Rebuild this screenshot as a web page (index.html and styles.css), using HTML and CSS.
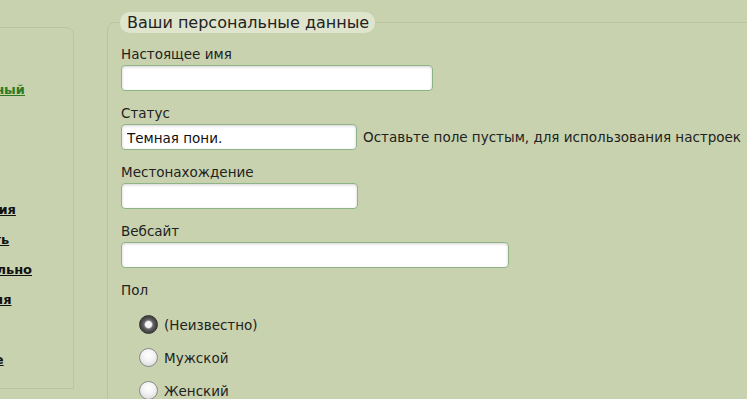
FILE: index.html
```html
<!DOCTYPE html>
<html lang="ru">
<head>
<meta charset="utf-8">
<title>Профиль</title>
<link rel="stylesheet" href="styles.css">
</head>
<body>
<div class="page">
  <nav class="sidebar">
    <ul class="menu">
      <li><a href="#">Основное</a></li>
      <li><a href="#" class="active">Персональный</a></li>
      <li><a href="#">Связь</a></li>
      <li><a href="#">Подпись</a></li>
      <li><a href="#">Вид</a></li>
      <li><a href="#">Уведомления</a></li>
      <li><a href="#">Приватность</a></li>
      <li><a href="#">Дополнительно</a></li>
      <li><a href="#">Информация</a></li>
      <li><a href="#">Друзья</a></li>
      <li><a href="#">Сохранение</a></li>
    </ul>
  </nav>
  <main class="main">
    <fieldset class="box">
      <legend class="legend">Ваши персональные данные</legend>
      <div class="field">
        <label class="label">Настоящее имя</label>
        <input class="input w-name" type="text" value="">
      </div>
      <div class="field">
        <label class="label">Статус</label>
        <div class="inline">
          <input class="input w-status" type="text" value="Темная пони.">
          <span class="help">Оставьте поле пустым, для использования настроек</span>
        </div>
      </div>
      <div class="field">
        <label class="label">Местонахождение</label>
        <input class="input w-loc" type="text" value="">
      </div>
      <div class="field">
        <label class="label">Вебсайт</label>
        <input class="input w-web" type="text" value="">
      </div>
      <div class="gender">
        <div class="label">Пол</div>
        <div class="radios">
          <label class="radio"><span class="dot checked"></span>(Неизвестно)</label>
          <label class="radio"><span class="dot"></span>Мужской</label>
          <label class="radio"><span class="dot"></span>Женский</label>
        </div>
      </div>
    </fieldset>
  </main>
</div>
</body>
</html>
```

FILE: styles.css
```css
html, body {
  margin: 0;
  padding: 0;
  background: #c8d2ae;
  overflow: hidden;
}
body {
  font-family: "DejaVu Sans", Verdana, sans-serif;
  color: #222;
  font-size: 13.5px;
}
.page {
  display: flex;
  align-items: flex-start;
  width: 900px;
}
.sidebar {
  margin-left: -96px;
  margin-top: 27px;
  width: 168px;
  height: 360px;
  border: 1px solid #bac4a0;
  border-radius: 0 8px 0 0;
  flex: none;
}
.menu {
  list-style: none;
  margin: 0;
  padding: 23px 0 0 9px;
}
.menu li {
  height: 30px;
  line-height: 16px;
  white-space: nowrap;
}
.menu a {
  font-weight: bold;
  font-size: 13px;
  color: #111;
  text-decoration: underline;
}
.menu a.active {
  color: #2f7a1e;
}
.main {
  margin-left: 33px;
  margin-top: 12px;
  flex: 1;
}
.box {
  margin: 0;
  border: 1px solid #bac4a0;
  border-radius: 8px 0 0 0;
  padding: 14px 0 20px 13px;
  min-height: 400px;
}
.legend {
  font-size: 16px;
  line-height: 21px;
  background: #dfe5cd;
  border-radius: 10px;
  padding: 0 6px 0 7px;
  margin-left: -1px;
  color: #222;
}
.field {
  display: flex;
  flex-direction: column;
  align-items: flex-start;
  margin-bottom: 15px;
}
.label {
  display: block;
  line-height: 15px;
  margin-bottom: 3px;
}
.inline {
  display: flex;
  align-items: center;
  gap: 6px;
  white-space: nowrap;
}
.input {
  box-sizing: border-box;
  height: 26px;
  border: 1px solid #8db386;
  border-radius: 4px;
  background: #fff;
  box-shadow: inset 0 1px 3px rgba(0, 0, 0, 0.18);
  font-family: "DejaVu Sans", Verdana, sans-serif;
  font-size: 13.5px;
  color: #111;
  padding: 2px 5px 0;
  margin: 0;
}
.w-name { width: 312px; }
.w-status { width: 236px; }
.w-loc { width: 237px; }
.w-web { width: 388px; }
.help { color: #222; }
.gender .label {
  margin-bottom: 10px;
}
.radios {
  padding-left: 18px;
  display: flex;
  flex-direction: column;
}
.radio {
  display: flex;
  align-items: center;
  height: 33px;
}
.dot {
  box-sizing: border-box;
  width: 19px;
  height: 19px;
  border-radius: 50%;
  border: 1px solid #8a8a8a;
  background: radial-gradient(circle at 50% 35%, #ffffff 0%, #f2f2f2 45%, #cfcfcf 100%);
  margin-right: 6px;
  flex: none;
}
.dot.checked {
  border-color: #333;
  background: radial-gradient(circle at 50% 50%, #f4f4f4 0 3px, #bdbdbd 3.6px, #6a6a6a 4.6px, #4a4a4a 7px, #2e2e2e 100%);
}
```
